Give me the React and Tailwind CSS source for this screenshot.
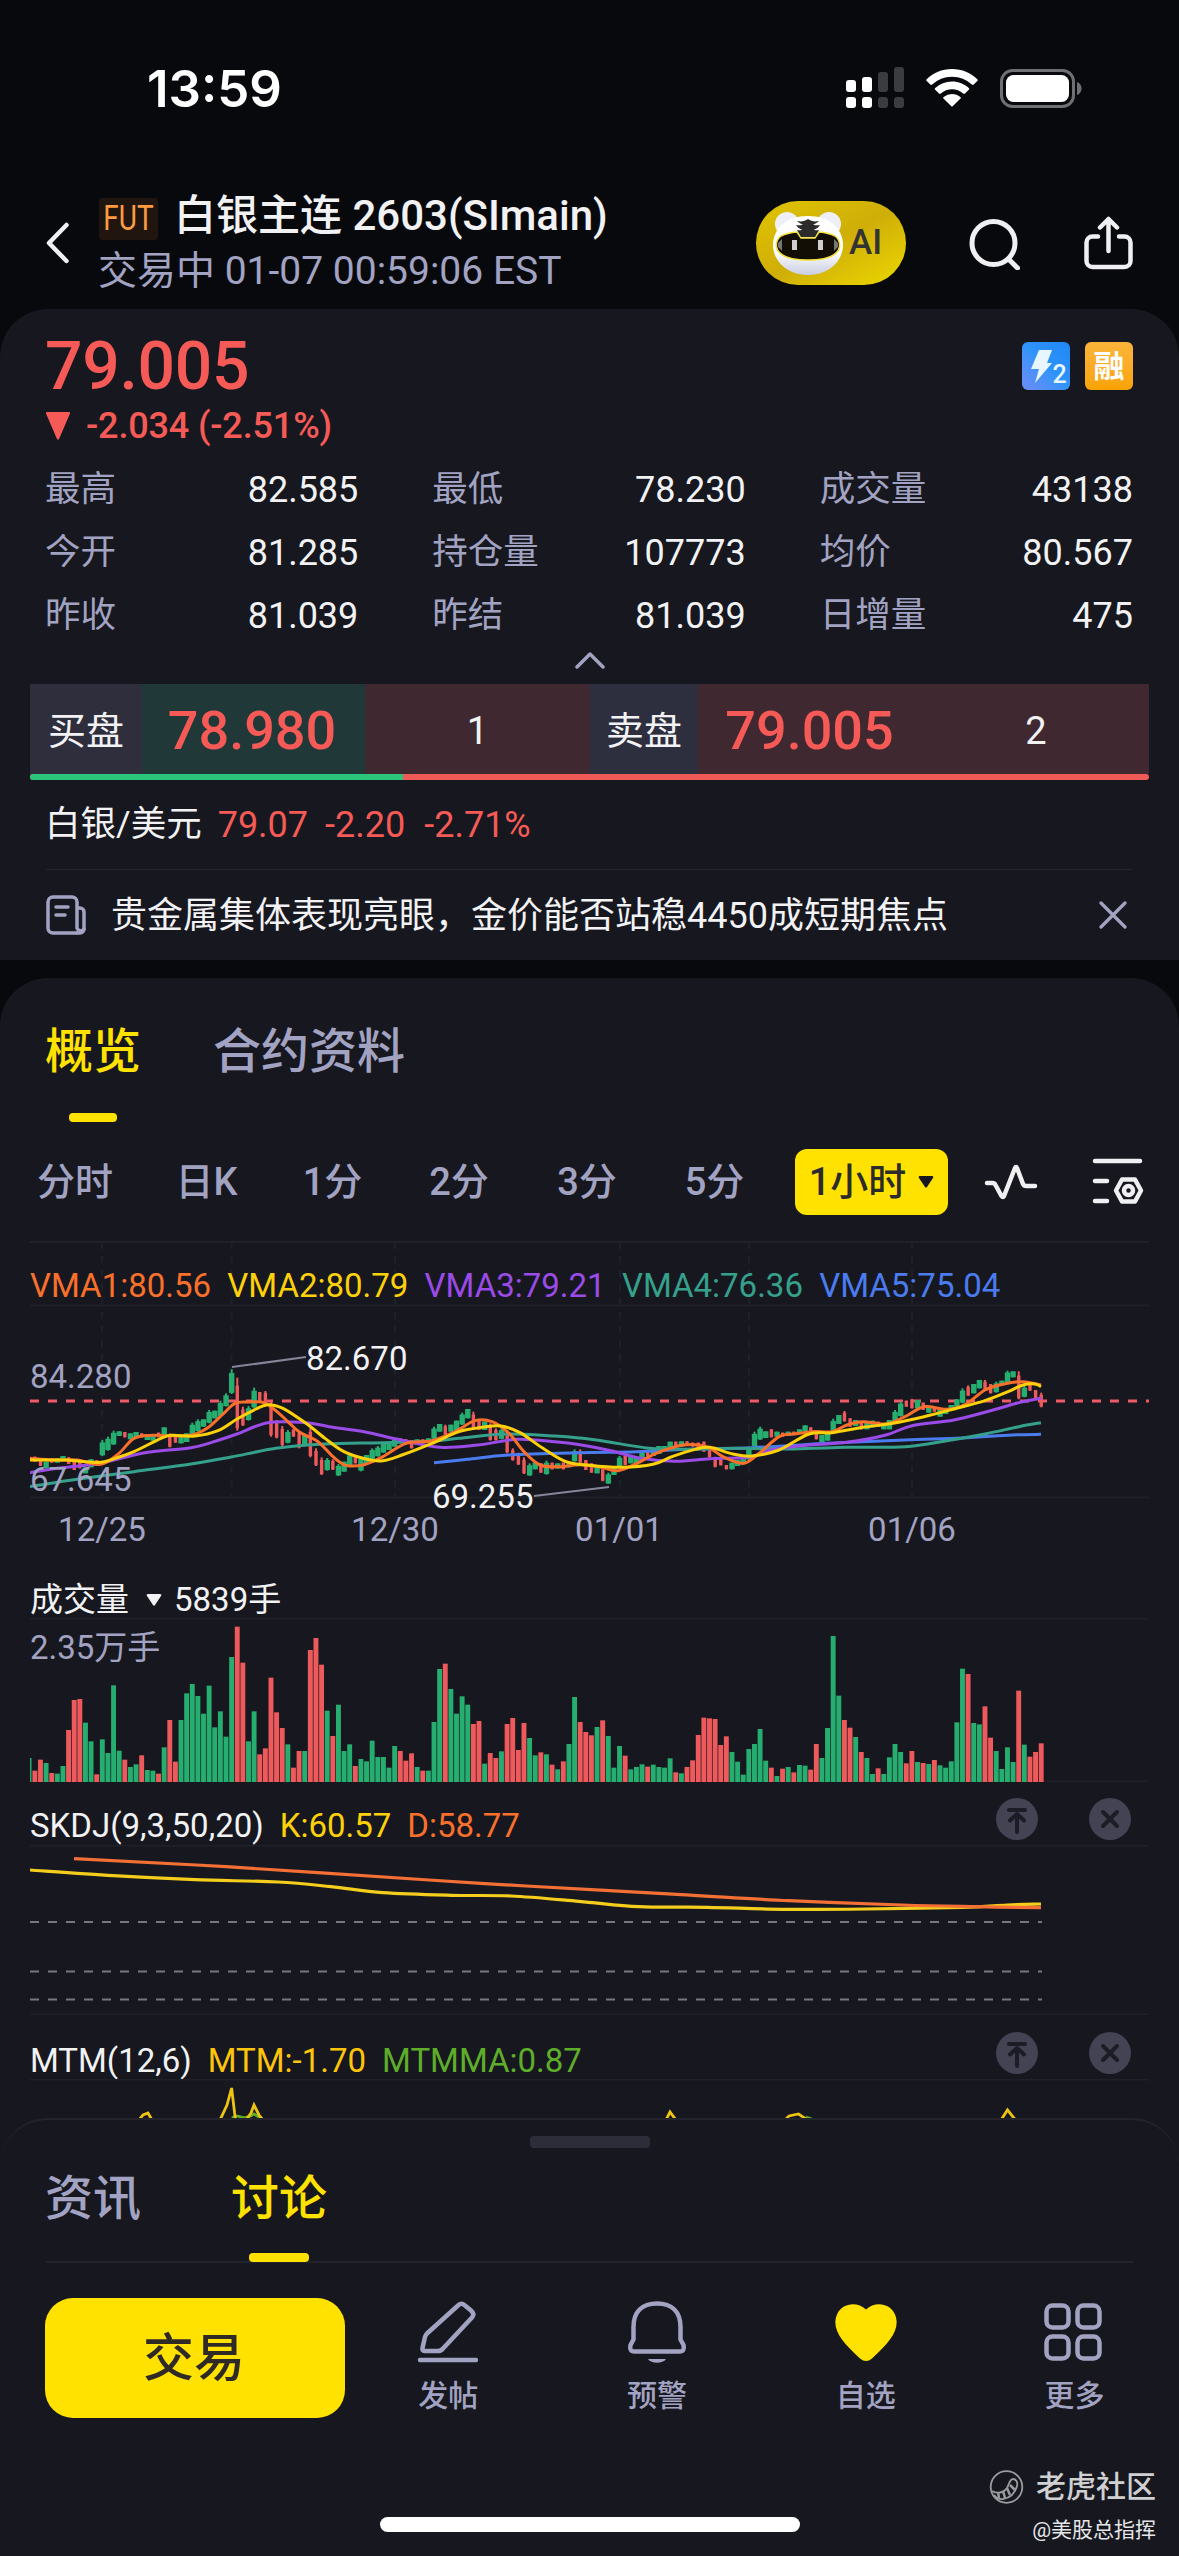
const UP = '#26ae70';
const DOWN = '#ee5a5b';
const STEP = 5.622;

// one letter per hour: r = falling, g = rising
const TREND = [
  'rrgrggrrrg', 'grggggrggr', 'ggrgrrgggg', 'ggggggrrgg', 'rrrrrgrrgr', 'rrgrgggrgg',
  'gggggrrrgr', 'gggrggggrr', 'grrgrrrrgg', 'rgrgrggrrr', 'grgggrgggr', 'ggggrgrrrr',
  'rrrrgggggg', 'grgrgrggrr', 'ggggrrgrgg', 'rggggrrgrg', 'rgggggrggr', 'rggggrgrrr',
].join('');

const VOLUME = [
  34, 67, 57, 27, 25, 48, 156, 246, 249, 178, 122, 23, 128, 87, 290, 94, 67, 45, 53, 80,
  36, 34, 25, 104, 186, 61, 186, 266, 294, 258, 205, 289, 164, 212, 136, 375, 466, 358, 122, 212,
  83, 101, 313, 209, 162, 113, 43, 93, 93, 396, 432, 352, 214, 138, 232, 93, 113, 48, 69, 62,
  124, 75, 75, 43, 108, 93, 64, 86, 45, 34, 34, 180, 339, 355, 279, 205, 257, 232, 174, 183,
  55, 87, 72, 92, 174, 192, 96, 177, 132, 80, 89, 83, 52, 38, 62, 114, 255, 180, 150, 140,
  165, 185, 138, 43, 108, 79, 38, 45, 53, 46, 52, 45, 43, 71, 29, 26, 45, 65, 141, 193,
  191, 189, 111, 137, 90, 61, 22, 99, 114, 159, 64, 43, 18, 40, 45, 29, 51, 49, 37, 114,
  72, 162, 438, 259, 186, 163, 135, 90, 72, 24, 41, 24, 74, 114, 90, 56, 93, 60, 57, 54,
  66, 50, 43, 62, 179, 340, 324, 177, 173, 227, 133, 93, 39, 104, 60, 274, 112, 76, 90, 116,
];

const HIGH = [
  680, 690, 695, 685, 685, 678, 682, 690, 695, 712, 688, 690, 630, 620, 602, 604, 606, 610, 606, 610,
  612, 615, 608, 592, 610, 620, 618, 610, 578, 568, 568, 540, 542, 512, 490, 418, 443, 530, 528, 473,
  486, 483, 515, 570, 588, 600, 598, 602, 610, 592, 655, 682, 684, 688, 702, 695, 676, 680, 678, 675,
  655, 648, 642, 640, 630, 625, 628, 630, 628, 628, 625, 590, 582, 584, 584, 572, 548, 537, 545, 570,
  575, 580, 595, 595, 600, 655, 668, 682, 700, 698, 700, 692, 698, 700, 698, 695, 658, 658, 690, 700,
  705, 712, 728, 715, 678, 678, 680, 680, 668, 660, 660, 648, 648, 635, 635, 634, 634, 638, 638, 635,
  655, 680, 682, 705, 698, 690, 680, 650, 605, 590, 604, 598, 605, 608, 605, 605, 598, 586, 592, 605,
  615, 610, 566, 555, 543, 565, 570, 575, 578, 572, 575, 580, 570, 540, 514, 512, 508, 510, 518, 530,
  532, 540, 535, 525, 508, 475, 466, 462, 450, 450, 462, 455, 452, 422, 424, 424, 468, 462, 480, 488,
];

const LOW = [
  695, 708, 715, 698, 698, 692, 702, 720, 715, 730, 712, 700, 678, 662, 645, 618, 622, 628, 622, 622,
  630, 632, 622, 620, 652, 638, 640, 636, 620, 605, 590, 580, 565, 560, 530, 492, 602, 588, 572, 535,
  515, 520, 620, 625, 648, 640, 620, 655, 645, 682, 708, 735, 722, 720, 738, 725, 705, 700, 724, 700,
  690, 680, 668, 660, 650, 640, 640, 655, 645, 640, 638, 628, 605, 615, 605, 600, 585, 565, 600, 600,
  600, 632, 632, 628, 670, 692, 705, 732, 738, 718, 728, 734, 718, 716, 718, 712, 695, 700, 720, 728,
  730, 754, 762, 735, 712, 705, 700, 700, 690, 680, 678, 672, 662, 655, 652, 650, 645, 650, 652, 665,
  682, 712, 706, 718, 718, 708, 702, 690, 650, 630, 624, 622, 620, 620, 618, 615, 612, 604, 612, 628,
  636, 632, 612, 582, 575, 590, 588, 598, 598, 592, 590, 598, 598, 578, 560, 530, 535, 535, 540, 548,
  545, 560, 552, 540, 530, 520, 498, 490, 475, 482, 490, 488, 465, 458, 442, 508, 502, 482, 505, 532,
];

const AVERAGES = [
  {
    color: '#4a7cf0',
    points: [[404, 698], [437, 688], [479, 675], [550, 668], [607, 665], [665, 657], [722, 653], [798, 640], [875, 630], [932, 624], [982, 615], [1011, 613]],
  },
  {
    color: '#35a08c',
    points: [[0, 770], [8, 766], [47, 748], [104, 725], [161, 702], [200, 682], [246, 655], [295, 642], [353, 638], [402, 633], [429, 625], [475, 612], [525, 618], [550, 624], [573, 633], [619, 655], [649, 658], [703, 655], [764, 657], [817, 652], [875, 650], [917, 632], [955, 612], [989, 590], [1011, 578]],
  },
  {
    color: '#9a4be8',
    points: [[0, 728], [27, 715], [70, 700], [115, 668], [161, 653], [184, 635], [207, 612], [238, 578], [276, 578], [299, 590], [334, 605], [368, 628], [410, 652], [448, 645], [487, 628], [525, 635], [550, 644], [581, 662], [611, 685], [645, 694], [680, 686], [718, 682], [741, 660], [779, 645], [817, 637], [856, 615], [882, 587], [924, 570], [963, 540], [989, 518], [1011, 505]],
  },
  {
    color: '#f9702c',
    points: [[0, 685], [24, 690], [47, 690], [71, 703], [89, 670], [104, 625], [123, 616], [138, 617], [161, 616], [177, 595], [192, 555], [205, 520], [219, 516], [234, 518], [249, 550], [269, 605], [288, 635], [303, 680], [316, 706], [334, 704], [353, 680], [376, 640], [402, 632], [425, 605], [445, 572], [462, 575], [479, 610], [494, 665], [510, 705], [529, 710], [550, 704], [569, 710], [588, 722], [607, 700], [626, 670], [653, 645], [676, 650], [695, 683], [714, 700], [730, 668], [749, 620], [764, 612], [783, 605], [802, 605], [817, 585], [833, 575], [856, 582], [875, 560], [894, 530], [917, 538], [936, 522], [955, 480], [974, 462], [993, 455], [1011, 465]],
  },
  {
    color: '#fdd10a',
    points: [[0, 690], [35, 690], [50, 694], [71, 697], [85, 685], [104, 665], [131, 625], [142, 616], [165, 618], [188, 602], [207, 567], [226, 537], [238, 524], [253, 535], [276, 580], [295, 625], [314, 665], [337, 688], [353, 692], [372, 675], [402, 640], [429, 605], [452, 592], [471, 588], [490, 608], [513, 655], [536, 695], [559, 706], [592, 712], [623, 703], [642, 680], [665, 658], [680, 652], [703, 672], [722, 678], [749, 660], [779, 612], [802, 608], [833, 592], [863, 580], [894, 560], [924, 537], [955, 512], [978, 485], [993, 465], [1005, 462], [1011, 470]],
  },
];

const SKDJ_K = [[0, 25], [83, 30.7], [165, 34.7], [248, 37], [301, 41.7], [353, 47.7], [421, 50.3], [481, 51], [549, 56.3], [609, 61.7], [677, 62.3], [752, 64.3], [835, 64], [932, 62.3], [977, 60], [1011, 59]];
const SKDJ_D = [[44, 13.7], [196, 21.7], [399, 35], [496, 41], [647, 49.3], [759, 55.7], [872, 60], [947, 61.7], [1011, 62.7]];

const QUOTES = [
  ['最高', '82.585'],
  ['最低', '78.230'],
  ['成交量', '43138'],
  ['今开', '81.285'],
  ['持仓量', '107773'],
  ['均价', '80.567'],
  ['昨收', '81.039'],
  ['昨结', '81.039'],
  ['日增量', '475'],
];

const barColor = (i) => (TREND[i] === 'r' ? DOWN : UP);

// price rows are kept in thirds of a pixel
const priceY = (v) => v / 3 - 12;

const smooth = (pts) => {
  let d = `M${pts[0][0]} ${pts[0][1]}`;
  for (let i = 0; i < pts.length - 1; i++) {
    const p0 = pts[i - 1] || pts[i];
    const p1 = pts[i];
    const p2 = pts[i + 1];
    const p3 = pts[i + 2] || p2;
    d += ` C${p1[0] + (p2[0] - p0[0]) / 6} ${p1[1] + (p2[1] - p0[1]) / 6} ${p2[0] - (p3[0] - p1[0]) / 6} ${p2[1] - (p3[1] - p1[1]) / 6} ${p2[0]} ${p2[1]}`;
  }
  return d;
};

const StatusBar = () => (
  <div className="flex h-[176px] items-center justify-between pr-[97px] pl-[147px]">
    <div className="font-['Inter'] text-[51px] leading-none font-semibold text-white">13:59</div>
    <div className="flex items-center">
      <svg className="h-[42px] w-[59px]" viewBox="0 0 59 42">
        <g fill="#fff">
          <rect x="0" y="13" width="10" height="12" rx="3" />
          <rect x="16" y="10" width="10" height="15" rx="3" />
          <rect x="0" y="30" width="10" height="11" rx="3" />
          <rect x="16" y="30" width="10" height="11" rx="3" />
        </g>
        <g fill="#3b3c40">
          <rect x="32" y="5" width="10" height="20" rx="3" />
          <rect x="48" y="0" width="10" height="25" rx="3" />
          <rect x="32" y="30" width="10" height="11" rx="3" />
          <rect x="48" y="30" width="10" height="11" rx="3" />
        </g>
      </svg>
      <svg className="ml-[21px] h-[38px] w-[52px]" viewBox="0 0 52 38" fill="#fff">
        <path d="M26 0C36 0 45 4 51.3 10.200a1.200 1.200 0 0 1 0 1.800l-3.600 3.600a1.300 1.300 0 0 1-1.800 0A28.500 28.500 0 0 0 26 7.700 28.500 28.500 0 0 0 6.100 15.600a1.300 1.300 0 0 1-1.800 0L.7 12a1.200 1.200 0 0 1 0-1.800C7 4 16 0 26 0Z" />
        <path d="M26 12.500c6.500 0 12.400 2.500 16.800 6.500a1.200 1.200 0 0 1 0 1.800l-3.800 3.700a1.300 1.300 0 0 1-1.800 0A17 17 0 0 0 26 20.200a17 17 0 0 0-11.200 4.300 1.300 1.300 0 0 1-1.800 0l-3.800-3.700a1.200 1.200 0 0 1 0-1.800A24.800 24.800 0 0 1 26 12.500Z" />
        <path d="M26 25c3.200 0 6 1.100 8.300 2.900a1.200 1.200 0 0 1 0 1.900l-7.400 7.300a1.200 1.200 0 0 1-1.800 0l-7.400-7.300a1.200 1.200 0 0 1 0-1.900A13.200 13.200 0 0 1 26 25Z" />
      </svg>
      <svg className="ml-[22px] h-[39px] w-[82px]" viewBox="0 0 82 39">
        <rect x="1.500" y="1.500" width="72" height="36" rx="11" fill="none" stroke="#6f7073" strokeWidth="3" />
        <rect x="6" y="6" width="63" height="27" rx="7.500" fill="#fff" />
        <path d="M77 13c3 1.200 4.500 3.500 4.500 6.500S80 24.800 77 26Z" fill="#6f7073" />
      </svg>
    </div>
  </div>
);

const TigerHead = () => (
  <svg className="h-[66px] w-[72px]" viewBox="0 0 72 66">
    <defs>
      <linearGradient id="fur" x1="0" y1="0" x2="0" y2="1">
        <stop offset="0.6" stopColor="#fff" />
        <stop offset="1" stopColor="#c9cde0" />
      </linearGradient>
    </defs>
    <circle cx="15" cy="14" r="12" fill="#eef0f6" />
    <circle cx="57" cy="14" r="12" fill="#eef0f6" />
    <path d="M36 6c22 0 35 13 35 29S57 65 36 65 1 51 1 35 14 6 36 6Z" fill="url(#fur)" />
    <path d="M9 26c4-2 10-3.500 16-4l4 6h14l4-6c6 .5 12 2 16 4 4 3 5 7 4.500 11C65.500 46 54 50 36 50S6.500 46 4.500 37C4 33 5 29 9 26Z" fill="#120d05" stroke="#f4e13c" strokeWidth="1.500" />
    <path d="M25 11c5 1 8 0 11-2 3 2 6 3 11 2-2 2-4 3-6 3.500 3 1 5 1 7 .5-2 3-4 4-6 4.500 1 1 2 1 5 .5l-4 7H29l-4-7c3 .5 4 .5 5-.5-2-.5-4-1.500-6-4.500 2 .5 4 .5 7-.5-2-.5-4-1.500-6-3.500Z" fill="#2b2b2b" />
    <rect x="20" y="30" width="5" height="10" fill="#cfcfcf" />
    <rect x="46" y="30" width="5" height="10" fill="#cfcfcf" />
    <path d="M6 33l4-4v12l-4-4ZM66 33l-4-4v12l4-4Z" fill="#77777b" />
  </svg>
);

const Header = () => (
  <div className="flex h-[133px] items-center pr-[46px] pl-[46px]">
    <svg className="h-[42px] w-[24px]" viewBox="0 0 24 42" fill="none" stroke="#f0f0f2" strokeWidth="4.500" strokeLinecap="round" strokeLinejoin="round">
      <path d="M20.500 3 3 21l17.500 18" />
    </svg>
    <div className="ml-[29px] flex flex-col pt-[3px]">
      <div className="flex h-[54px] items-center">
        <div className="mt-[5px] flex h-[42px] w-[59px] items-center justify-center rounded-[4px] bg-[#20160f]">
          <span className="scale-x-[0.8] text-[35px] leading-none text-[#fd9b42]">FUT</span>
        </div>
        <h1 className="ml-[16px] text-[42px] leading-none font-medium text-[#f2f2f4]">白银主连 2603(SImain)</h1>
      </div>
      <p className="-ml-[1px] flex h-[56px] items-center text-[39px] leading-none text-[#a2a3c2]">交易中 01-07 00:59:06 EST</p>
    </div>
    <div className="ml-auto flex h-[84px] w-[150px] items-center rounded-full bg-linear-to-br from-[#e0c400] via-[#cfae08] to-[#ecd800] pl-[16px]">
      <TigerHead />
      <span className="ml-[5px] text-[35px] leading-none font-medium text-[#333]">AI</span>
    </div>
    <svg className="ml-[61px] h-[54px] w-[54px]" viewBox="0 0 54 54" fill="none" stroke="#f0f0f2" strokeWidth="5">
      <circle cx="26.500" cy="27" r="21.500" />
      <path d="m41.500 43 9 9" strokeLinecap="round" />
    </svg>
    <svg className="ml-[62px] h-[54px] w-[50px]" viewBox="0 0 50 54" fill="none" stroke="#f0f0f2" strokeWidth="4.500" strokeLinecap="round" strokeLinejoin="round">
      <path d="M15 20.500H9.500a6 6 0 0 0-6 6V45a6 6 0 0 0 6 6h32a6 6 0 0 0 6-6V26.500a6 6 0 0 0-6-6H36M25.500 35V4M17 11.500 25.500 3l8.500 8.500" />
    </svg>
  </div>
);

const QuoteCard = () => (
  <section className="flex h-[651px] flex-col rounded-t-[48px] bg-[#17181f] px-[46px] pt-[22px]">
    <div className="flex h-[68px] items-center justify-between">
      <div className="-ml-[1px] pt-[3px] text-[66px] leading-none font-medium tracking-[-0.3px] text-[#f65a57]">79.005</div>
      <div className="flex gap-[15px] pt-[2px]">
        <div className="h-[48px] w-[48px] overflow-hidden rounded-[6px] bg-linear-to-tr from-[#6a8cf5] via-[#2f94fa] to-[#1f86f5]">
          <svg className="h-[48px] w-[48px]" viewBox="0 0 48 48">
            <path d="M17 8h13l-5 13h5L13 41l4-14H9Z" fill="#e8f6ff" />
            <text x="30.500" y="41" fontSize="25" fontWeight="500" fill="#e8f6ff">2</text>
          </svg>
        </div>
        <div className="flex h-[48px] w-[48px] items-center justify-center rounded-[6px] bg-linear-to-b from-[#fbb53a] to-[#f8a300] text-[31px] leading-none font-bold text-white">
          融
        </div>
      </div>
    </div>
    <div className="flex h-[54px] items-center text-[36px] leading-none font-medium tracking-[-0.15px] text-[#f65a57]">
      <svg className="mr-[16px] h-[28px] w-[24px]" viewBox="0 0 24 28" fill="#f65a57">
        <path d="M1 0h22q1.500 0 1 1.500L13 27q-1 1.500-2 0L0 1.500Q-.5 0 1 0Z" />
      </svg>
      -2.034 (-2.51%)
    </div>
    <div className="mt-[5px] grid grid-cols-3 gap-x-[75px]">
      {QUOTES.map(([label, value]) => (
        <div key={label} className="flex h-[63px] items-center justify-between text-[36px] leading-none">
          <span className="-ml-[1px] text-[35.500px] text-[#a2a3c2]">{label}</span>
          <span className="text-[#f2f2f4]">{value}</span>
        </div>
      ))}
    </div>
    <div className="flex h-[37px] justify-center pt-[4px]">
      <svg className="h-[18px] w-[30px]" viewBox="0 0 30 18" fill="none" stroke="#a2a3c2" strokeWidth="3.500" strokeLinecap="round" strokeLinejoin="round">
        <path d="M2 16 15 3l13 13" />
      </svg>
    </div>

    {/* Bid / ask */}
    <div className="-mx-[16px] flex h-[90px] shrink-0 items-stretch bg-[#3f2830] leading-none">
      <div className="flex w-[112px] items-center justify-center bg-[#2e2e3d] pt-[3px] text-[38px] text-[#f2f2f4]">买盘</div>
      <div className="flex w-[223px] items-center justify-center bg-[#213839] pt-[4px] pr-[3px] text-[54px] font-medium text-[#f65a57]">78.980</div>
      <div className="flex w-[225px] items-center justify-center pt-[3px] text-[38px] text-[#f2f2f4]">1</div>
      <div className="flex w-[108px] items-center justify-center bg-[#2e2f3e] pt-[3px] text-[38px] text-[#f2f2f4]">卖盘</div>
      <div className="flex w-[223px] items-center justify-center pt-[4px] text-[54px] font-medium text-[#f65a57]">79.005</div>
      <div className="flex w-[228px] items-center justify-center pt-[3px] pl-[2px] text-[38px] text-[#f2f2f4]">2</div>
    </div>
    <div className="-mx-[16px] flex h-[6px] shrink-0 overflow-hidden rounded-full bg-[#f05b58]">
      <div className="w-[373px] bg-[#2cc57c]" />
    </div>

    <div className="flex h-[90px] items-center gap-[17px] border-b border-[#24252e] pt-[1px] text-[36px] leading-none text-[#f65a57]">
      <span className="-ml-[1px] text-[35.500px] text-[#f2f2f4]">白银/美元</span>
      <span className="-ml-[1px]">79.07</span>
      <span>-2.20</span>
      <span className="ml-[2px]">-2.71%</span>
    </div>
    <div className="flex h-[89px] items-center">
      <svg className="h-[40px] w-[40px]" viewBox="0 0 40 40" fill="none" stroke="#a2a3c2" strokeWidth="3.500" strokeLinecap="round" strokeLinejoin="round">
        <path d="M31 38H7a5 5 0 0 1-5-5V7a5 5 0 0 1 5-5h19a5 5 0 0 1 5 5v26a4 4 0 0 0 7 1V17a4 4 0 0 0-4-4h-3M10 12h12M10 20h9" />
        <path d="M31 38h3a4 4 0 0 0 4-4" />
      </svg>
      <p className="ml-[25px] pt-[2px] text-[36px] leading-none text-[#f2f2f4]">贵金属集体表现亮眼，金价能否站稳4450成短期焦点</p>
      <svg className="mr-[6px] ml-auto h-[28px] w-[28px]" viewBox="0 0 28 28" stroke="#a2a3c2" strokeWidth="3.200" strokeLinecap="round">
        <path d="m2 2 24 24M26 2 2 26" />
      </svg>
    </div>
  </section>
);

const PeriodBar = () => (
  <div className="flex h-[66px] items-center pl-[8px] text-[38px] leading-none font-medium text-[#a2a3c2]">
    <span className="w-[134px] text-center">分时</span>
    <span className="w-[129px] text-center">日K</span>
    <span className="w-[123px] text-center">1分</span>
    <span className="w-[130px] text-center">2分</span>
    <span className="w-[126px] text-center">3分</span>
    <span className="w-[129px] text-center">5分</span>
    <div className="ml-[16px] flex h-[66px] w-[153px] items-center justify-center gap-[12px] rounded-[12px] bg-[#ffe200] text-[#2b2b2b]">
      1小时
      <svg className="h-[12px] w-[16px]" viewBox="0 0 16 12" fill="#17181f">
        <path d="M2 0h12q2 0 1 2L9 11q-1 1.500-2 0L1 2Q0 0 2 0Z" />
      </svg>
    </div>
    <svg className="ml-[36px] h-[38px] w-[54px]" viewBox="0 0 54 38" fill="none" stroke="#f0f0f2" strokeWidth="4.500" strokeLinecap="round" strokeLinejoin="round">
      <path d="M3 20h5.500q2 0 3 2l6 11q1.500 2 2.500 0L31 5q1-2 2 0l6 16q1 2 3 2h9" />
    </svg>
    <svg className="ml-[54px] h-[48px] w-[52px]" viewBox="0 0 52 48" fill="none" stroke="#f0f0f2" strokeWidth="4.500" strokeLinecap="round" strokeLinejoin="round">
      <path d="M3 3h45M3 23h12M3 43h12M30 21.500h13l6 11-6 11H30l-6-11Z" />
      <circle cx="36.500" cy="32.500" r="4.500" />
    </svg>
  </div>
);

const PriceChart = () => (
  <svg className="block h-[320px] w-[1119px]" viewBox="0 0 1119 320" fontSize="33">
    <g stroke="#1f2028" strokeWidth="2">
      <path d="M0 63.500H1119M0 255.500H1119" />
      <path d="M72 0V255M201.500 0V255M365 0V255M590 0V255M719 0V255M882 0V255" strokeDasharray="7 7" />
    </g>
    <path d="M0 159H1119" stroke="#ee5a66" strokeWidth="3" strokeDasharray="9 9" />
    {HIGH.map((high, i) => {
      const x = 4.9 + i * STEP;
      const top = priceY(high);
      const height = (LOW[i] - high) / 3;
      const wick = height > 10 ? height * 0.15 : 0;
      const w = TREND[i] === 'r' ? 3.4 : 5.4;
      return (
        <g key={i} fill={barColor(i)}>
          <rect x={x - 1} y={top} width="2" height={height} />
          <rect x={x - w / 2} y={top + wick} width={w} height={height - wick * 1.3} />
        </g>
      );
    })}
    {AVERAGES.map(({ color, points }) => (
      <path key={color} d={smooth(points.map(([x, v]) => [x, priceY(v)]))} fill="none" stroke={color} strokeWidth="3" />
    ))}
    <path d="m202 125 74-10M504 254l75-9" stroke="#85869a" strokeWidth="2.200" />
    <g fill="#f2f2f4">
      <text x="276" y="127.500">82.670</text>
      <text x="402" y="265.500">69.255</text>
    </g>
    <g fill="#a2a3c2">
      <text x="0" y="145.500">84.280</text>
      <text x="0" y="248.500">67.645</text>
      <g textAnchor="middle">
        <text x="72" y="298.500">12/25</text>
        <text x="365" y="298.500">12/30</text>
        <text x="589" y="298.500">01/01</text>
        <text x="882" y="298.500">01/06</text>
      </g>
    </g>
  </svg>
);

const VolumeChart = () => (
  <svg className="block h-[164px] w-[1119px]" viewBox="0 0 1119 164" fontSize="33">
    <path d="M0 .5H1119M0 163.500H1119" stroke="#1f2028" strokeWidth="2" />
    <rect x="0" y="140" width="1.500" height="24" fill={UP} />
    {VOLUME.map((v, i) => (
      <rect key={i} x={2.4 + i * STEP} y={164 - v / 3} width="4.900" height={v / 3} fill={barColor(i)} />
    ))}
    <text x="0" y="41" fill="#a2a3c2">2.35万手</text>
  </svg>
);

const PaneButtons = () => (
  <div className="mr-[18px] -mt-[14px] ml-auto flex gap-[51px]">
    <svg className="h-[42px] w-[42px]" viewBox="0 0 42 42" stroke="#1b1c25" strokeWidth="4" strokeLinecap="round" strokeLinejoin="round" fill="none">
      <circle cx="21" cy="21" r="21" fill="#434353" stroke="none" />
      <path d="M13 12h16M21 34V17M14 22.500l7-6.500 7 6.500" />
    </svg>
    <svg className="h-[42px] w-[42px]" viewBox="0 0 42 42" stroke="#1b1c25" strokeWidth="4" strokeLinecap="round" fill="none">
      <circle cx="21" cy="21" r="21" fill="#434353" stroke="none" />
      <path d="m14 14 14 14M28 14 14 28" />
    </svg>
  </div>
);

const SkdjChart = () => (
  <svg className="block h-[170px] w-[1119px]" viewBox="0 0 1119 170" fill="none">
    <path d="M0 .5H1119M0 169.500H1119" stroke="#1f2028" strokeWidth="2" />
    <path d="M0 77H1012M0 126.500H1012M0 154.500H1012" stroke="#767784" strokeWidth="2" strokeDasharray="9 9" />
    <path d={smooth(SKDJ_K)} stroke="#f5cd1c" strokeWidth="3.200" />
    <path d={smooth(SKDJ_D)} stroke="#f36f35" strokeWidth="3.200" />
  </svg>
);

const MtmChart = () => (
  <svg className="block h-[39px] w-[1119px]" viewBox="0 0 1119 39" fill="none" strokeWidth="2.800">
    <path d="M0 .5H1119" stroke="#1f2028" strokeWidth="2" />
    <path d="M202 39q4-3 9-1t13-3l8 5M776 38l6 2" stroke="#5fae2a" />
    <path d="m109 41 4-5 5-2 4 7M190 41l7-15 4.600-17 3 25 1 7M216 41l5-7 3-8 5 10 4 5M636 41l4-8 6 8M755 41l4-4 9.500-2 9 6M971 41l6.500-10 8 10" stroke="#ecc413" />
  </svg>
);

const ChartCard = () => (
  <section className="mt-[18px] rounded-t-[48px] bg-[#17181f]">
    <div className="flex h-[171px] gap-[72px] pl-[45px] text-[48px] leading-none font-medium">
      <div className="flex flex-col items-center pt-[50px] text-[#ffe200]">
        概览
        <div className="mt-[37px] h-[9px] w-[48px] rounded-[4px] bg-[#ffe200]" />
      </div>
      <div className="pt-[50px] text-[#a2a3c2]">合约资料</div>
    </div>
    <PeriodBar />

    <div className="px-[30px] pt-[27px]">
      <div className="relative">
        <div className="absolute -top-px left-0 grid h-[87px] w-full grid-cols-[197.300px_197.300px_197.300px_197.300px_1fr] items-center border-t-2 border-[#1f2028] text-[33px] leading-none">
          <span className="text-[#f9702c]">VMA1:80.56</span>
          <span className="text-[#fdd10a]">VMA2:80.79</span>
          <span className="text-[#9a4be8]">VMA3:79.21</span>
          <span className="text-[#35a08c]">VMA4:76.36</span>
          <span className="text-[#4a7cf0]">VMA5:75.04</span>
        </div>
        <PriceChart />
      </div>

      <div className="flex h-[56px] items-center pt-[19px] text-[33px] leading-none text-[#f2f2f4]">
        成交量
        <svg className="mr-[12px] ml-[17px] h-[12px] w-[16px]" viewBox="0 0 16 12" fill="#f2f2f4">
          <path d="M2 0h12q2 0 1 2L9 11q-1 1.500-2 0L1 2Q0 0 2 0Z" />
        </svg>
        5839手
      </div>
      <VolumeChart />

      <div className="flex h-[63px] items-center gap-[16px] pt-[24px] text-[33px] leading-none text-[#f2f2f4]">
        SKDJ(9,3,50,20)
        <span className="text-[#fdd10a]">K:60.57</span>
        <span className="text-[#f9702c]">D:58.77</span>
        <PaneButtons />
      </div>
      <SkdjChart />

      <div className="flex h-[64px] items-center gap-[16px] pt-[26px] text-[33px] leading-none text-[#f2f2f4]">
        MTM(12,6)
        <span className="text-[#fdc50a]">MTM:-1.70</span>
        <span className="text-[#5fae2a]">MTMMA:0.87</span>
        <PaneButtons />
      </div>
      <MtmChart />
    </div>
  </section>
);

const Sheet = () => (
  <div className="h-[144px] rounded-t-[48px] border-t-2 border-[#23242c] bg-[#17181f] px-[46px]">
    <div className="mx-auto mt-[16px] h-[12px] w-[120px] rounded-[4px] bg-[#2d2d3a]" />
    <div className="flex h-[115px] gap-[90px] border-b-2 border-[#22232b] text-[48px] leading-none font-medium">
      <div className="-ml-[1px] pt-[27px] text-[#a2a3c2]">资讯</div>
      <div className="flex flex-col items-center pt-[27px] text-[#ffe200]">
        讨论
        <div className="mt-[30px] h-[9px] w-[60px] shrink-0 rounded-[4px] bg-[#ffe200]" />
      </div>
    </div>
  </div>
);

const Action = ({ label, children }) => (
  <div className="flex w-[208.700px] flex-col items-center text-[30px] leading-none font-medium text-[#a2a3c2]">
    <svg className="mb-[16px] h-[66px] w-[66px]" viewBox="0 0 66 66" fill="none" stroke="#a2a3c2" strokeWidth="4.500" strokeLinecap="round" strokeLinejoin="round">
      {children}
    </svg>
    {label}
  </div>
);

const BottomBar = () => (
  <div className="flex h-[156px] pt-[36px] pl-[45px]">
    <button className="flex h-[120px] w-[300px] shrink-0 items-center justify-center rounded-[28px] bg-[#ffe200] pr-[2px] text-[51px] leading-none font-medium text-[#2f2a26]">
      交易
    </button>
    <div className="-ml-[1px] flex pt-[1px]">
      <Action label="发帖">
        <path d="M5 61h56" />
        <path d="M43 6.500q3-3.500 7 0l6 5q4 3.500 1 7L28 49.500q-2 2.500-5 2.500H9.500q-2.500 0-2-3L10 38q.5-2 2-3.500Z" />
      </Action>
      <Action label="预警">
        <path d="M33 4.500C18 4.500 9.500 13 9.500 28v12.500L6.500 46q-1.500 6.500 4 6.500h45q5.500 0 4-6.500l-3-5.500V28C56.500 13 48 4.500 33 4.500Z" />
        <path d="M24 60c3 5 15 5 18 0Z" fill="#a2a3c2" stroke="none" />
      </Action>
      <Action label="自选">
        <path d="M33 10.500C24 2 9 4 4 15.500-2 30 9 43 27 59.500q6 5 12 0C57 43 68 30 62 15.500 57 4 42 2 33 10.500Z" fill="#ffe200" stroke="none" />
      </Action>
      <Action label="更多">
        <rect x="5.500" y="6.500" width="22" height="22" rx="6" />
        <rect x="36.500" y="6.500" width="22" height="22" rx="6" />
        <rect x="5.500" y="37.500" width="22" height="22" rx="6" />
        <rect x="36.500" y="37.500" width="22" height="22" rx="6" />
      </Action>
    </div>
  </div>
);

const Footer = () => (
  <div className="relative h-[138px]">
    <div className="absolute top-[51px] right-[23px] flex flex-col items-end text-[#d0d0d3]">
      <div className="flex h-[36px] items-center text-[30px] leading-none font-medium">
        <svg className="mr-[12px] h-[34px] w-[35px]" viewBox="0 0 35 34" fill="none" stroke="#9a9aa0" strokeWidth="1.800">
          <circle cx="17.500" cy="17" r="15.800" />
          <path d="M3 21c5 3 12 2 15-3 2-4 3-9 6-9s5 3 4 7c-2 8-8 12-14 13-4 .5-7-1-9-4" />
          <path d="m9 22 1 6M14 21l2 7M18 18l3 7M21 15l5 5" strokeWidth="2.500" />
        </svg>
        老虎社区
      </div>
      <div className="mt-[13px] text-[21px] leading-[24px] text-[#e6e6e8]">@美股总指挥</div>
    </div>
    <div className="mx-auto h-full w-[420px] pt-[99px]">
      <div className="h-[15px] rounded-full bg-white" />
    </div>
  </div>
);

const App = () => {
  return (
    <div className="h-[2556px] w-[1179px] overflow-hidden bg-[#08090d] font-['Roboto','Noto_Sans_CJK_SC',sans-serif] whitespace-nowrap">
      <StatusBar />
      <Header />
      <QuoteCard />
      <ChartCard />
      <div className="bg-[#17181f]">
        <Sheet />
        <BottomBar />
        <Footer />
      </div>
    </div>
  );
};

export default App;
